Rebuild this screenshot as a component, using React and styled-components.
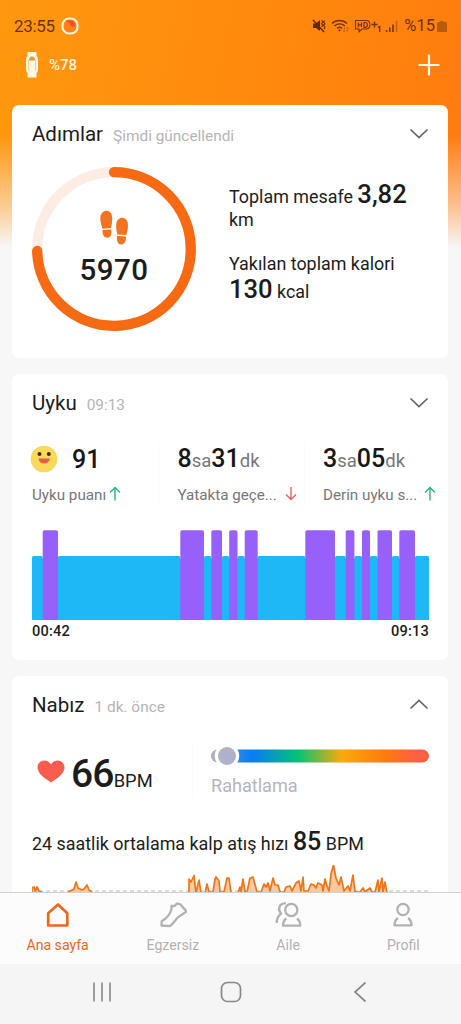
import React from 'react';
import styled, { createGlobalStyle } from 'styled-components';

const Global = createGlobalStyle`
  * { box-sizing: border-box; }
  body { margin: 0; font-family: Roboto, "Liberation Sans", sans-serif; color: #1c1c1c; }
  svg { display: block; flex: none; }
`;

const Phone = styled.div`
  width: 461px;
  height: 1024px;
  display: flex;
  flex-direction: column;
  overflow: hidden;
  background: #f7f7f7;
`;
const Screen = styled.main`
  height: 892px;
  overflow: hidden;
  background:
    linear-gradient(180deg, rgba(247,247,247,0) 0, rgba(247,247,247,0) 135px, rgba(247,247,247,.55) 205px, #f7f7f7 248px),
    linear-gradient(100deg, #ff980e 0%, #ff890d 45%, #ff7410 100%);
`;
const StatusBar = styled.div`
  height: 42px;
  padding: 10px 14px 0 14px;
  display: flex;
  align-items: center;
  justify-content: space-between;
  color: #6b3208;
`;
const Group = styled.div`
  display: flex;
  align-items: center;
  gap: ${p => p.$gap || 0}px;
`;
const StatusText = styled.span`
  font-size: ${p => p.$size}px;
  line-height: 20px;
  letter-spacing: ${p => p.$track || 0}px;
`;
const AppBar = styled.header`
  height: 63px;
  padding: 0 21px 17px 25px;
  display: flex;
  align-items: center;
  justify-content: space-between;
`;
const BandLevel = styled.span`
  color: #fff2de;
  font-size: 15px;
  font-weight: 500;
`;
const Cards = styled.div`
  display: flex;
  flex-direction: column;
  gap: 16px;
  padding: 0 13px 0 12px;
`;
const Card = styled.section`
  height: ${p => p.$h}px;
  flex: none;
  background: #fff;
  border-radius: 7px;
  padding: 0 19px 0 20px;
`;
const CardHead = styled.div`
  height: ${p => p.$h}px;
  display: flex;
  align-items: center;
  justify-content: space-between;
`;
const Heading = styled.div`
  display: flex;
  align-items: baseline;
  gap: 10px;
`;
const Title = styled.h2`
  margin: 0;
  font-weight: 400;
  font-size: 20.5px;
  line-height: 26px;
`;
const Note = styled.span`
  color: #b5b5b5;
  font-size: 15.4px;
`;
const StepsBody = styled.div`
  display: flex;
  padding-top: 4px;
`;
const Ring = styled.div`
  width: 164px;
  height: 164px;
  display: grid;
  > * { grid-area: 1 / 1; }
`;
const RingCenter = styled.div`
  display: flex;
  flex-direction: column;
  align-items: center;
  padding-top: 43px;
`;
const StepCount = styled.strong`
  font-size: 29.5px;
  line-height: 38px;
  font-weight: 500;
  letter-spacing: .5px;
  margin-top: 5px;
`;
const Facts = styled.div`
  padding: 18px 0 0 33px;
  display: flex;
  flex-direction: column;
  gap: 19px;
`;
const Fact = styled.div`
  font-size: 17.9px;
  line-height: ${p => p.$line}px;
  white-space: nowrap;
`;
const Big = styled.strong`
  font-size: ${p => p.$size || 25}px;
  line-height: 0;
  font-weight: 500;
  letter-spacing: ${p => p.$track || 0}px;
`;
const Stats = styled.div`
  display: grid;
  grid-template-columns: 145.5px 145.5px 1fr;
  height: 99px;
`;
const Stat = styled.div`
  height: 66px;
  margin-top: 12px;
  white-space: nowrap;
  background: ${p => p.$last ? 'none' : 'linear-gradient(#fafafa, #fafafa) 126px 0 / 1px 62px no-repeat'};
`;
const StatValue = styled.div`
  height: 32px;
  padding-top: 2px;
  display: flex;
  align-items: baseline;
  line-height: 32px;
  font-size: 18.5px;
  color: #777;
  strong { color: #161616; }
`;
const ScoreValue = styled(StatValue)`
  align-items: center;
  gap: 14px;
  margin-left: -2px;
  svg { margin-top: -3px; }
`;
const StatLabel = styled.div`
  display: flex;
  align-items: center;
  gap: ${p => p.$gap}px;
  font-size: 15.2px;
  line-height: 20px;
  color: #777;
  margin-top: 10px;
  svg { margin-top: -3px; }
`;
const ChartTimes = styled.div`
  display: flex;
  justify-content: space-between;
  font-size: 14.6px;
  font-weight: 500;
  line-height: 22px;
  letter-spacing: .2px;
`;
const PulseRow = styled.div`
  height: 80px;
  display: flex;
`;
const PulseNow = styled.div`
  width: 161px;
  height: 52px;
  margin-top: 12px;
  padding-left: 5px;
  display: flex;
  border-right: 1px solid #fafafa;
`;
const HeartBox = styled.div`
  padding-top: 15px;
  width: 34px;
`;
const Bpm = styled.div`
  font-size: 18.3px;
  line-height: 58px;
  white-space: nowrap;
  margin-top: 7px;
`;
const Zone = styled.div`
  padding: 11px 0 0 18px;
  color: #b5b5c2;
  font-size: 18.1px;
  line-height: 24px;
`;
const ZoneName = styled.div`margin-top: 6px;`;
const Average = styled.div`
  font-size: 17.9px;
  line-height: 30px;
  margin-top: 16px;
  white-space: nowrap;
`;
const TrendBox = styled.div`padding-top: 6px;`;
const TabBar = styled.nav`
  height: 72px;
  flex: none;
  border-top: 1px solid #d2d2d2;
  background: #fcfcfc;
  display: grid;
  grid-template-columns: repeat(4, 1fr);
`;
const Tab = styled.div`
  display: flex;
  flex-direction: column;
  align-items: center;
  padding-top: 8px;
  gap: 6px;
  color: ${p => p.$active ? '#ec681c' : '#b2b2b2'};
  font-size: 14.1px;
  line-height: 20px;
`;
const SystemBar = styled.footer`
  flex: 1;
  background: #f5f5f5;
  display: flex;
  align-items: center;
  gap: 108px;
  padding: 0 0 4px 92px;
`;

const Chevron = ({ up }) => (
  <svg width="20" height="14" viewBox="0 0 20 14" fill="none" stroke="#666" strokeWidth="1.7">
    <path d={up ? 'M1.5 10.5 10 2.5 18.5 10.5' : 'M1.5 2.5 10 10.5 18.5 2.5'} />
  </svg>
);
const Arrow = ({ down, color }) => (
  <svg width="12" height="15" viewBox="0 0 12 15" fill="none" stroke={color} strokeWidth="1.4">
    <path d={down ? 'M6 1v12.5M1 8.6l5 5 5-5' : 'M6 14.5V2M1 6.6l5-5 5 5'} />
  </svg>
);

const CardHeader = ({ h, title, note, up }) => (
  <CardHead $h={h}>
    <Heading><Title>{title}</Title><Note>{note}</Note></Heading>
    <Chevron up={up} />
  </CardHead>
);

const StatusIcons = () => (
  <svg width="88" height="16" viewBox="0 0 88 16" fill="none" stroke="#743308" strokeWidth="1.4">
    <path d="M1 5.5h3l4-3.5v11L4 10H1z" fill="#5c2b08" stroke="none" />
    <path d="M1 2l11 12" stroke="#5c2b08" />
    <path d="M9.5 2.5l1.6 1.5-1.6 1.7 1.6 1.6-1.6 1.6M12.5 2.5 11.7 4l1.2 1.7-1.2 1.6 1.2 2-1 2" strokeWidth="1.2" />
    <path d="M20 5.5c4-4 11-4 15 0M22.4 8c3-2.8 7.6-2.8 10.4 0M25 10.4c1.6-1.3 3.6-1.3 5 0" />
    <circle cx="27.5" cy="12.3" r="1.1" fill="#743308" stroke="none" />
    <path d="M32.3 9v5M30.8 12.5l1.5 1.5M35.2 14V9M36.6 10.5 35.2 9" stroke="#c26012" strokeWidth="1" />
    <path d="M43.5 2.5h11c3 0 3.5 1.5 3.5 4.3 0 2.8-1 4.2-3.5 4.2h-4.5l-3 2.8V11h-3.500z" strokeWidth="1.1" />
    <path d="M46.3 4.5v4.8M49.5 4.5v4.8M46.3 6.9h3.2M52 4.5v4.8h1.5c2.5 0 2.5-4.8 0-4.8z" strokeWidth="1.2" />
    <path d="M59.5 6.5h6M62.5 3.5v6M66 9.3l1.7-.8V14" />
    <path d="M74.5 12v2M77.8 9.5V14M81 6.5V14" strokeWidth="1.6" />
    <path d="M84.5 3v11" stroke="#c3610f" strokeWidth="1.6" />
  </svg>
);

const Footprints = () => (
  <svg width="28" height="36" viewBox="0.7 0 28 36" fill="#f47320">
    <path d="M7 .8C10.3.5 12.8 3.5 12.9 8c.1 4-.6 7.2-1.2 10.1L3.1 18.7C2.3 15.3.9 12.5 1 8.2 1.1 4 3.500 1.100 7 .8z" />
    <path d="M3.1 20.1l8.6-.6c1.2 4.5-.2 8-3.6 8.200-3.700.2-5-3.400-5-7.600z" />
    <path d="M23 7.8c3.7.3 5.700 3.200 5.700 7.100 0 4-.8 6.800-1.700 10.100l-8.900-.5c-.8-3.300-1.400-5.900-1.200-9.700.2-4.200 2.800-7.300 6.100-7z" />
    <path d="M17.8 26l8.900.5c0 4.500-1.700 8.200-5.100 8-3-.2-4.600-3.900-3.800-8.500z" />
  </svg>
);

const deep = [[10.7, 15.3], [148.3, 23.7], [179.3, 10.7], [197.2, 8.3], [212.7, 13], [273.3, 29.7], [313.7, 8.7], [330, 8], [345.5, 14.5], [367.3, 15.7]];
const light = [[0, 10.7], [26, 122.3], [172, 7.3], [190, 7.2], [205.5, 7.2], [225.7, 47.6], [303, 10.7], [322.4, 7.6], [338, 7.5], [360, 7.3], [383, 14]];
const SleepChart = () => (
  <svg width="397" height="90" viewBox="0 0 397 90">
    <rect y="29" width="397" height="61" fill="#1db8f5" />
    {light.map(([x, w]) => <rect key={x} x={x} y="26" width={w} height="8" rx="1.5" fill="#1db8f5" />)}
    {deep.map(([x, w]) => <path key={x} d={`M${x} 90V2q0-1.8 1.8-1.8h${w - 3.6}q1.8 0 1.8 1.8V90z`} fill="#9860fb" />)}
  </svg>
);

const pulse = [
  'M0 28V23L2 22 3 26 5 22 7 26 10 27',
  'M36 27 40 25 42 24 44 17 46 23 50 25 52 24 55 20 57 25 60 27',
  'M157 27V14L159 17 162 10.5 164 28 167 15 169 28H173L175 19 177 27H181L183 14 184 12 187 16 188 27H192L195 13 197 13 199 28H206L208 22 209 27 211 14 213 27H215L218 13 221 12 225 27H229L232 19 234 22 236 18 238 26 241 13 243 20 246 20 248 27H252L254 22 258 21 260 26 264 18 267 16 269 26 271 12 272 26H276L279 19 282 20 284 23 286 18 290 20 291 26 293 14 295 21 297 26 299 9 301.5 0 304 13 307 20 309 12 312 26 316 21 318 26 321 10 323 27H328L331 23 333 27 338 23 340 27H343L346 15 347 27 350 13 351 27 353 17 355 28',
];
const PulseChart = () => (
  <svg width="397" height="32" viewBox="0 0 397 32">
    <path d="M0 26h397" stroke="#bbb" strokeWidth="1" strokeDasharray="4 3" />
    {pulse.map(d => <path key={d} d={d} fill="#fbc9a1" stroke="#ef7516" strokeWidth="1.7" strokeLinejoin="round" />)}
  </svg>
);

const tabs = [
  { label: 'Ana sayfa', active: true, icon: <path d="M4.2 12.2 14 3.5l9.3 8.700V24.500H4.200z" strokeWidth="2.7" /> },
  { label: 'Egzersiz', icon: <path d="M18.5 2.5c-1.5 0-1.8 2.2-3.2 2.5L12.5 5c.5 4.5-1 8-6 12.5l-3.8 2.7-.2 4.3 8.500.7c4-3 5-6 8-9l8.500-5.700c-1.500-2.500-4.500-4.500-5.800-7z" strokeWidth="2.3" /> },
  { label: 'Aile', icon: <><circle cx="17.3" cy="9" r="6.1" /><path d="M12.3 17.5c-2.2 1.6-3.3 4-3.3 7.200h17.300c0-3.200-1.100-5.600-3.300-7.200M12 2.200C4.500 2.500 3.500 9 7.200 12.500c-3.200 2.200-4.500 5.500-4.500 9.500" /></> },
  { label: 'Profil', icon: <><circle cx="14" cy="8.5" r="5.7" /><path d="M9 17c-2.5 1.7-3.5 4-3.5 7.300h17c0-3.300-1-5.600-3.500-7.300" /></> },
];

export default function App() {
  return (
    <Phone>
      <Global />
      <Screen>
        <StatusBar>
          <Group $gap={6}>
            <StatusText $size={17} $track={-0.3}>23:55</StatusText>
            <svg width="18" height="18" viewBox="0 0 18 18">
              <rect x="1.5" y="1.5" width="15" height="15" rx="6.5" fill="#ff8116" stroke="#fff3dd" strokeWidth="2.2" />
              <path d="M5 4c4-2 9-.5 9 5-2 1.500-4.500.5-5-2C8 5.500 6.500 5.500 5 4z" fill="#f34d22" />
            </svg>
          </Group>
          <Group $gap={4}>
            <StatusIcons />
            <Group $gap={2}>
              <StatusText $size={16.5}>%15</StatusText>
              <svg width="10" height="13" viewBox="0 0 10 13" fill="#b75b0c"><path d="M3 1h4v1h1.500Q10 2 10 3.500V12H0V3.500Q0 2 1.500 2H3z" /></svg>
            </Group>
          </Group>
        </StatusBar>
        <AppBar>
          <Group $gap={10}>
            <svg width="14" height="28" viewBox="0 0 14 28">
              <path d="M2.5 1h9v4Q13 6 13 9v9q0 3-1.500 4v4.500h-9V22Q1 21 1 18V9q0-3 1.500-4z" fill="#fff7e8" />
              <path d="M4 9.500Q4 5.500 7 5.500t3 4z" fill="#e89a39" /><path d="M3.500 9v11M10.500 9v11" stroke="#ffbd68" strokeWidth=".8" />
            </svg>
            <BandLevel>%78</BandLevel>
          </Group>
          <svg width="22" height="22" viewBox="0 0 22 22" stroke="#fff8ec" strokeWidth="2.2"><path d="M.5 11h21M11 .5v21" /></svg>
        </AppBar>
        <Cards>
          <Card $h={253}>
            <CardHeader h={58} title="Adımlar" note="Şimdi güncellendi" />
            <StepsBody>
              <Ring>
                <svg width="164" height="164" viewBox="0 0 164 164" fill="none" strokeWidth="10.3">
                  <circle cx="82" cy="82" r="76.8" stroke="#fdece4" />
                  <path d="M82 5.2A76.8 76.8 0 1 1 5.200 84" stroke="#f56a13" strokeLinecap="round" />
                </svg>
                <RingCenter><Footprints /><StepCount>5970</StepCount></RingCenter>
              </Ring>
              <Facts>
                <Fact $line={23}>Toplam mesafe <Big $size={25.6}>3,82</Big><br />km</Fact>
                <Fact $line={28}>Yakılan toplam kalori<br /><Big $size={25.6}>130</Big> kcal</Fact>
              </Facts>
            </StepsBody>
          </Card>
          <Card $h={286}>
            <CardHeader h={57} title="Uyku" note="09:13" />
            <Stats>
              <Stat>
                <ScoreValue>
                  <svg width="28" height="28" viewBox="0 0 28 28">
                    <circle cx="14" cy="14" r="13.3" fill="#f9d95c" /><circle cx="9.5" cy="9" r="2" fill="#3d2b1e" /><circle cx="18.8" cy="9" r="2" fill="#3d2b1e" />
                    <path d="M8.500 13.500h11.300c-.5 3.500-2.500 5-5.600 5s-5.200-1.500-5.700-5z" fill="#e75c43" />
                  </svg>
                  <Big>91</Big>
                </ScoreValue>
                <StatLabel $gap={3}>Uyku puanı<Arrow color="#25b47e" /></StatLabel>
              </Stat>
              <Stat>
                <StatValue><Big>8</Big>sa<Big>31</Big>dk</StatValue>
                <StatLabel $gap={8}>Yatakta geçe...<Arrow down color="#e5626c" /></StatLabel>
              </Stat>
              <Stat $last>
                <StatValue><Big>3</Big>sa<Big>05</Big>dk</StatValue>
                <StatLabel $gap={7}>Derin uyku s...<Arrow color="#25b47e" /></StatLabel>
              </Stat>
            </Stats>
            <SleepChart />
            <ChartTimes><span>00:42</span><span>09:13</span></ChartTimes>
          </Card>
          <Card $h={286}>
            <CardHeader h={57} title="Nabız" note="1 dk. önce" up />
            <PulseRow>
              <PulseNow>
                <HeartBox>
                  <svg width="28" height="23" viewBox="0 0 28 23"><path d="M14 22.500C9 19 .5 14 .5 7.500.5 0 10-2 14 4.500 18-2 27.500 0 27.500 7.500 27.500 14 19 19 14 22.500z" fill="#fa5c50" /></svg>
                </HeartBox>
                <Bpm><Big $size={39} $track={-0.8}>66</Big>BPM</Bpm>
              </PulseNow>
              <Zone>
                <svg width="218" height="24" viewBox="0 0 218 24">
                  <defs><linearGradient id="zones">
                    <stop offset="0" stopColor="#afb0bc" /><stop offset=".07" stopColor="#afb0bc" /><stop offset=".1" stopColor="#368ce9" /><stop offset=".19" stopColor="#087cf4" />
                    <stop offset=".4" stopColor="#05c374" /><stop offset=".6" stopColor="#fba90b" /><stop offset=".8" stopColor="#ff7a0d" /><stop offset=".94" stopColor="#ff5f43" />
                  </linearGradient></defs>
                  <rect y="5.5" width="218" height="13" rx="6.5" fill="url(#zones)" />
                  <circle cx="16" cy="12" r="12.3" fill="#fff" /><circle cx="16" cy="12" r="9" fill="#b0b0ca" />
                </svg>
                <ZoneName>Rahatlama</ZoneName>
              </Zone>
            </PulseRow>
            <Average>24 saatlik ortalama kalp atış hızı <Big>85</Big> BPM</Average>
            <TrendBox><PulseChart /></TrendBox>
          </Card>
        </Cards>
      </Screen>
      <TabBar>
        {tabs.map(t => (
          <Tab key={t.label} $active={t.active}>
            <svg width="28" height="28" viewBox="0 0 28 28" fill="none" stroke="currentColor" strokeWidth="2.3" strokeLinejoin="round">{t.icon}</svg>
            <span>{t.label}</span>
          </Tab>
        ))}
      </TabBar>
      <SystemBar>
        <svg width="20" height="20" viewBox="0 0 20 20" stroke="#888" strokeWidth="1.6"><path d="M2 .5v19M10 .5v19M18 .5v19" /></svg>
        <svg width="22" height="22" viewBox="0 0 22 22" fill="none" stroke="#888" strokeWidth="1.7"><rect x="1.5" y="1.5" width="19" height="19" rx="6" /></svg>
        <svg width="22" height="22" viewBox="6 0 22 22" fill="none" stroke="#888" strokeWidth="1.7"><path d="M21.5 1.5 11 11l10.500 9.500" /></svg>
      </SystemBar>
    </Phone>
  );
}
